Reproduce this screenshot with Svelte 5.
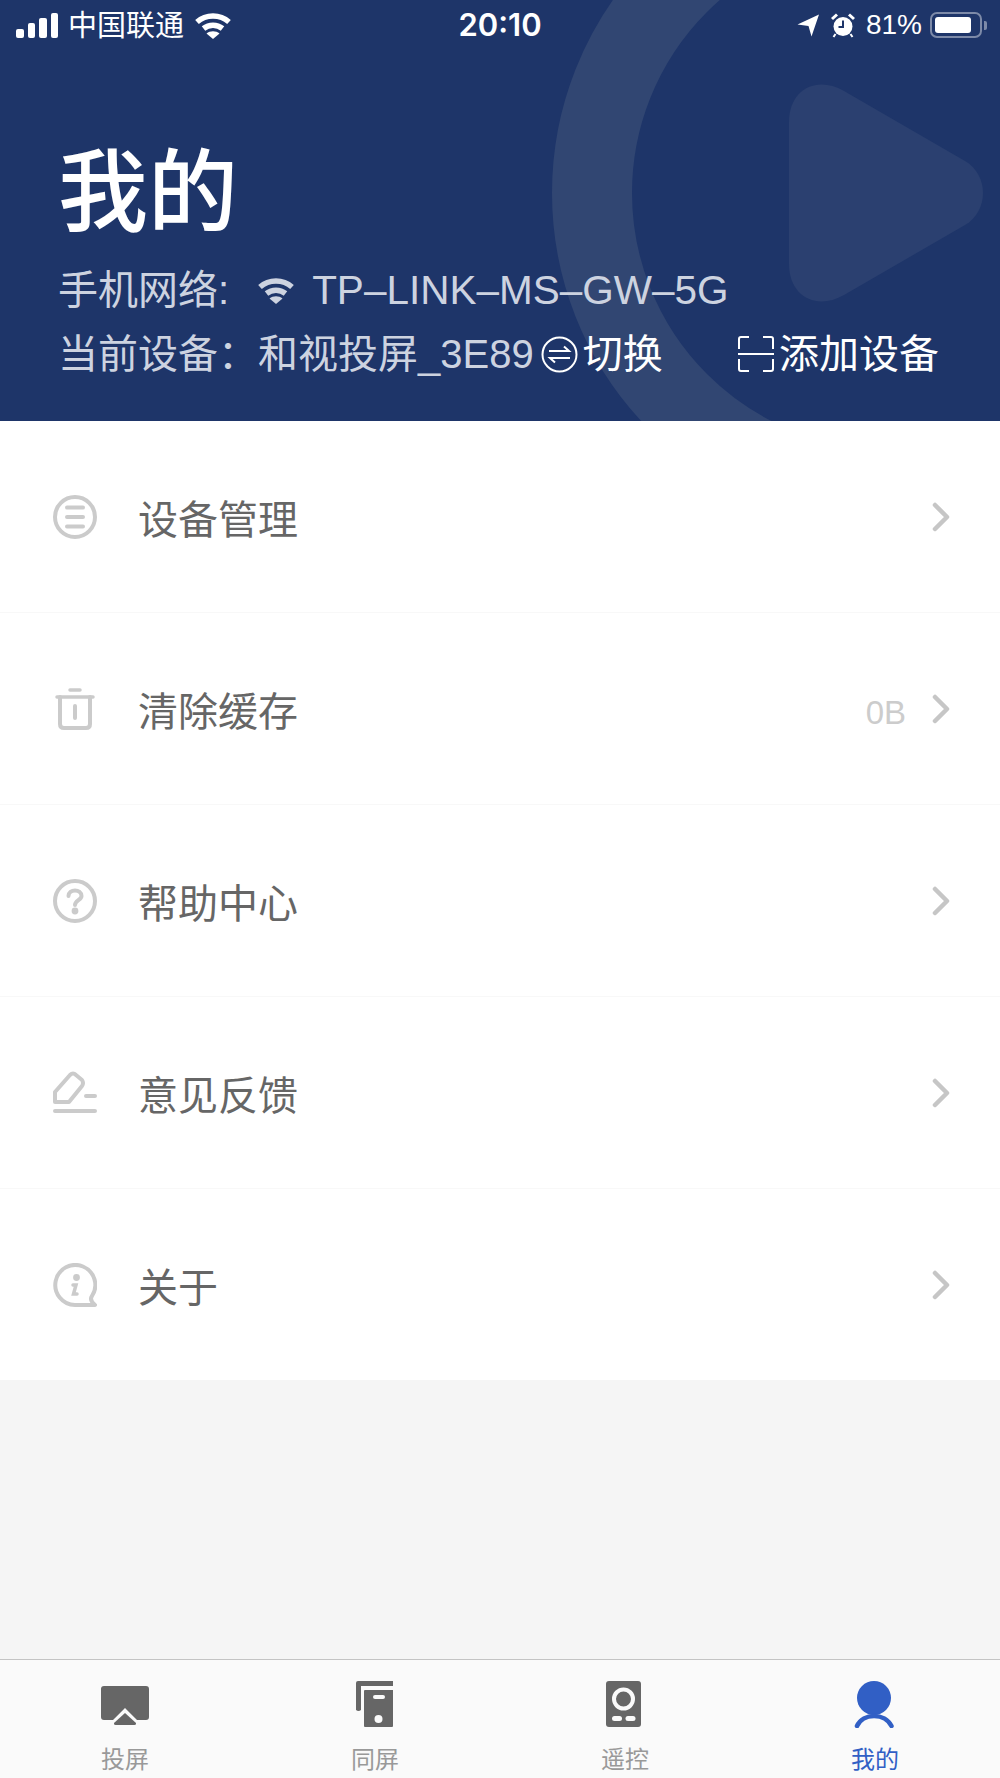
<script>
  const rows = [
    { key: 'device', label: '设备管理' },
    { key: 'clear', label: '清除缓存', value: '0B' },
    { key: 'help', label: '帮助中心' },
    { key: 'feedback', label: '意见反馈' },
    { key: 'about', label: '关于' }
  ];
  const tabs = [
    { key: 'cast', label: '投屏' },
    { key: 'mirror', label: '同屏' },
    { key: 'remote', label: '遥控' },
    { key: 'me', label: '我的', active: true }
  ];
</script>

{#snippet wifi(w, h)}
  <svg width={w} height={h} viewBox="0 0 36 27" fill="none" stroke="currentColor" stroke-width="5.5">
    <path d="M2 10 C11 2 25 2 34 10" />
    <path d="M8.5 16.5 C14 12 22 12 27.5 16.5" />
    <path d="M18 27 L11.5 21.5 C15 18.5 21 18.5 24.5 21.5 Z" fill="currentColor" stroke="none" />
  </svg>
{/snippet}

<div class="page">
  <header class="hero">
    <svg class="bg-mark" width="1000" height="421" viewBox="0 0 1000 421" fill="none">
      <circle cx="888" cy="193" r="296" stroke="#314672" stroke-width="80" />
      <path d="M789 122 C789 90 816 75 844 91 L965 161 C989 175 989 211 965 225 L844 295 C816 311 789 296 789 264 Z" fill="#2b4070" />
    </svg>

    <div class="status">
      <div class="status-left">
        <div class="signal"><i></i><i></i><i></i><i></i></div>
        <span class="carrier">中国联通</span>
        {@render wifi(36, 27)}
      </div>
      <div class="time">20:10</div>
      <div class="status-right">
        <svg width="23" height="23" viewBox="0 0 23 23"><path d="M22 0.5 L14.5 22.5 L11.5 12 L0.5 10.5 Z" fill="#fff" /></svg>
        <svg width="24" height="25" viewBox="0 0 24 25" fill="none">
          <circle cx="12" cy="13.5" r="9.5" fill="#fff" />
          <path d="M12 7.5 V14 H7.5" stroke="#1e3569" stroke-width="2" />
          <path d="M1 6 L6 1.5 M23 6 L18 1.5" stroke="#fff" stroke-width="3" />
          <path d="M4.5 21 L2.5 24 M19.5 21 L21.5 24" stroke="#fff" stroke-width="2" />
        </svg>
        <span class="pct">81%</span>
        <div class="battery"><div class="level"></div></div>
        <div class="nub"></div>
      </div>
    </div>

    <h1>我的</h1>
    <div class="info">
      <div class="net">
        <span>手机网络:</span>
        <span class="net-wifi">{@render wifi(36, 27)}</span>
        <span class="ssid">TP–LINK–MS–GW–5G</span>
      </div>
      <div class="dev">
        <div class="current">
          <span>当前设备：</span>
          <span>和视投屏_3E89</span>
          <button class="action switch">
            <svg width="37" height="37" viewBox="0 0 37 37" fill="none" stroke="#fff" stroke-width="2">
              <circle cx="18.5" cy="18.5" r="17" />
              <path d="M8 15 H28 L23 10.5 M29 22 H9 L14 26.5" />
            </svg>
            切换
          </button>
        </div>
        <button class="action add">
          <svg width="36" height="36" viewBox="0 0 36 36" fill="none" stroke="#fff" stroke-width="2">
            <path d="M11 1 H3 Q1 1 1 3 V13 M25 1 H33 Q35 1 35 3 V13 M0 18 H36 M1 23 V33 Q1 35 3 35 H11 M35 23 V33 Q35 35 33 35 H25" />
          </svg>
          添加设备
        </button>
      </div>
    </div>
  </header>

  <ul class="menu">
    {#each rows as row}
      <li class="row">
        <svg class="row-icon" width="44" height="44" viewBox="0 0 44 44" fill="none" stroke="#cbcbcb" stroke-width="4" stroke-linecap="round">
          {#if row.key === 'device'}
            <circle cx="22" cy="22" r="20" />
            <path d="M14 12.5 H30 M14 22 H30 M14 31.5 H30" />
          {:else if row.key === 'clear'}
            <path d="M4 10 H40 M17 3 H27" stroke-width="3.5" />
            <path d="M7 10 V37 Q7 41 11 41 H33 Q37 41 37 37 V10 M22 19 V31" />
          {:else if row.key === 'help'}
            <circle cx="22" cy="22" r="20" />
            <path d="M15.5 17 C15.5 9.5 28.5 9.5 28.5 17 C28.5 21 22 21.5 22 26" />
            <circle cx="22" cy="32" r="1.4" fill="#cbcbcb" />
          {:else if row.key === 'feedback'}
            <path d="M2 31 V21 L17 4 Q20 1 23 4 L29 9 Q31 12 29 15 L16 31 Z" stroke-linejoin="round" />
            <path d="M33 25 H42 M2 40 H42" />
          {:else if row.key === 'about'}
            <path d="M42 42 H22 A20 20 0 1 1 39 33 Q36 37 42 42 Z" stroke-linejoin="round" />
            <path d="M20 22 H23 L20.5 31 H24" stroke-width="3.5" />
            <circle cx="23.5" cy="14.5" r="1.4" fill="#cbcbcb" />
          {/if}
        </svg>
        <span class="label">{row.label}</span>
        {#if row.value}<span class="value">{row.value}</span>{/if}
        <svg class="chevron" width="18" height="30" viewBox="0 0 18 30" fill="none" stroke="#c6c6c6" stroke-width="4.5" stroke-linecap="round" stroke-linejoin="round">
          <path d="M3 3 L15 15 L3 27" />
        </svg>
      </li>
    {/each}
  </ul>

  <div class="spacer"></div>

  <nav class="tabbar">
    {#each tabs as tab}
      <div class="tab" class:active={tab.active}>
        <svg width="50" height="48" viewBox="0 0 50 48">
          {#if tab.key === 'cast'}
            <path d="M4 6 H46 Q49 6 49 9 V37 Q49 40 46 40 H37 L25 28 L13 40 H4 Q1 40 1 37 V9 Q1 6 4 6 Z" fill="#666" />
            <path d="M25 33 L36 43 Q36.5 45 34.5 45 H15.5 Q13.5 45 14 43 Z" fill="#666" />
          {:else if tab.key === 'mirror'}
            <path d="M6 30 V3 Q6 1 8 1 H43 V6 H11 V30 Q8.5 32 6 30 Z" fill="#666" />
            <path d="M15 10 H43 V46 Q43 47 42 47 H15 Q14 47 14 46 V11 Q14 10 15 10 Z" fill="#666" />
            <rect x="23" y="15" width="12" height="4" rx="2" fill="#fafafa" />
            <circle cx="28.5" cy="39" r="4" fill="#fafafa" />
          {:else if tab.key === 'remote'}
            <rect x="6" y="1" width="35" height="46" rx="3" fill="#666" />
            <circle cx="23.5" cy="19" r="9.5" fill="none" stroke="#fafafa" stroke-width="4" />
            <rect x="12" y="36" width="10" height="5" rx="2.5" fill="#fafafa" />
            <rect x="25.5" y="36" width="10" height="5" rx="2.5" fill="#fafafa" />
          {:else}
            <circle cx="24" cy="18" r="17" fill="#315fc5" />
            <path d="M7 46 C13 32.5 35 32.5 41.5 46" fill="none" stroke="#315fc5" stroke-width="4.5" stroke-linecap="round" />
          {/if}
        </svg>
        <span>{tab.label}</span>
      </div>
    {/each}
  </nav>
</div>

<style>
  :global(body) { margin: 0; }
  .page { width: 1000px; height: 1778px; display: flex; flex-direction: column; background: #f5f5f5; font-family: "Liberation Sans", "Noto Sans CJK SC", sans-serif; overflow: hidden; }

  .hero { position: relative; height: 421px; flex: none; background: #1e3569; color: #fff; overflow: hidden; }
  .bg-mark { position: absolute; top: 0; left: 0; }

  .status { position: relative; height: 50px; display: grid; grid-template-columns: 1fr auto 1fr; align-items: center; padding: 0 13px 0 16px; }
  .status-left { display: flex; align-items: center; gap: 10px; }
  .signal { display: flex; align-items: flex-end; gap: 4px; height: 25px; }
  .signal i { display: block; width: 7.5px; background: #fff; border-radius: 2px; }
  .signal i:nth-child(1) { height: 9px; }
  .signal i:nth-child(2) { height: 15px; }
  .signal i:nth-child(3) { height: 20px; }
  .signal i:nth-child(4) { height: 25px; }
  .carrier { font-size: 29px; line-height: 34px; margin-top: 2px; }
  .status-left svg { margin-left: 1px; }
  .time { font-size: 31px; font-weight: 600; font-family: "Inter", "Liberation Sans", sans-serif; line-height: 34px; margin-left: -3px; }
  .status-right { display: flex; align-items: center; justify-content: flex-end; gap: 11px; }
  .pct { font-size: 28px; line-height: 34px; margin-right: -3px; }
  .battery { width: 52px; height: 26px; box-sizing: border-box; border: 2px solid #7d8aa8; border-radius: 7px; padding: 3px; }
  .level { width: 36px; height: 16px; background: #fff; border-radius: 3px; }
  .nub { width: 3px; height: 9px; background: #7d8aa8; border-radius: 0 2px 2px 0; margin-left: -9px; }

  h1 { position: relative; margin: 0; padding: 83px 0 0 58px; font-size: 90px; line-height: 120px; font-weight: 500; }
  .info { position: relative; padding: 5px 61px 0 58px; font-size: 40px; line-height: 64px; color: #cdd3e0; }
  .net { display: flex; align-items: center; height: 64px; }
  .net-wifi { display: flex; margin: 0 18px 0 29px; color: #cdd3e0; }
  .ssid { font-size: 40.5px; }
  .dev { display: flex; align-items: center; justify-content: space-between; height: 64px; }
  .current { display: flex; align-items: center; }
  .action { display: flex; align-items: center; gap: 5px; padding: 0; border: none; background: none; color: #fff; font: inherit; }
  .switch { margin-left: 7px; }

  .menu { list-style: none; margin: 0; padding: 0; background: #fff; flex: none; }
  .row { height: 192px; box-sizing: border-box; display: flex; align-items: center; padding: 0 50px 0 53px; border-bottom: 1px solid #f8f8f8; }
  .row:last-child { height: 191px; border-bottom: none; }
  .row-icon { flex: none; margin-right: 41px; }
  .label { flex: 1; font-size: 40px; line-height: 50px; color: #666; margin-top: 6px; }
  .value { font-size: 33px; color: #ccc; margin-right: 26px; margin-top: 8px; }
  .chevron { flex: none; }

  .spacer { flex: 1; }

  .tabbar { height: 119px; flex: none; box-sizing: border-box; display: grid; grid-template-columns: repeat(4, 1fr); background: #fafafa; border-top: 1px solid #c4c4c4; padding-top: 20px; }
  .tab { display: flex; flex-direction: column; align-items: center; font-size: 24px; line-height: 32px; color: #999; gap: 16px; }
  .tab.active { color: #315fc5; }
</style>
